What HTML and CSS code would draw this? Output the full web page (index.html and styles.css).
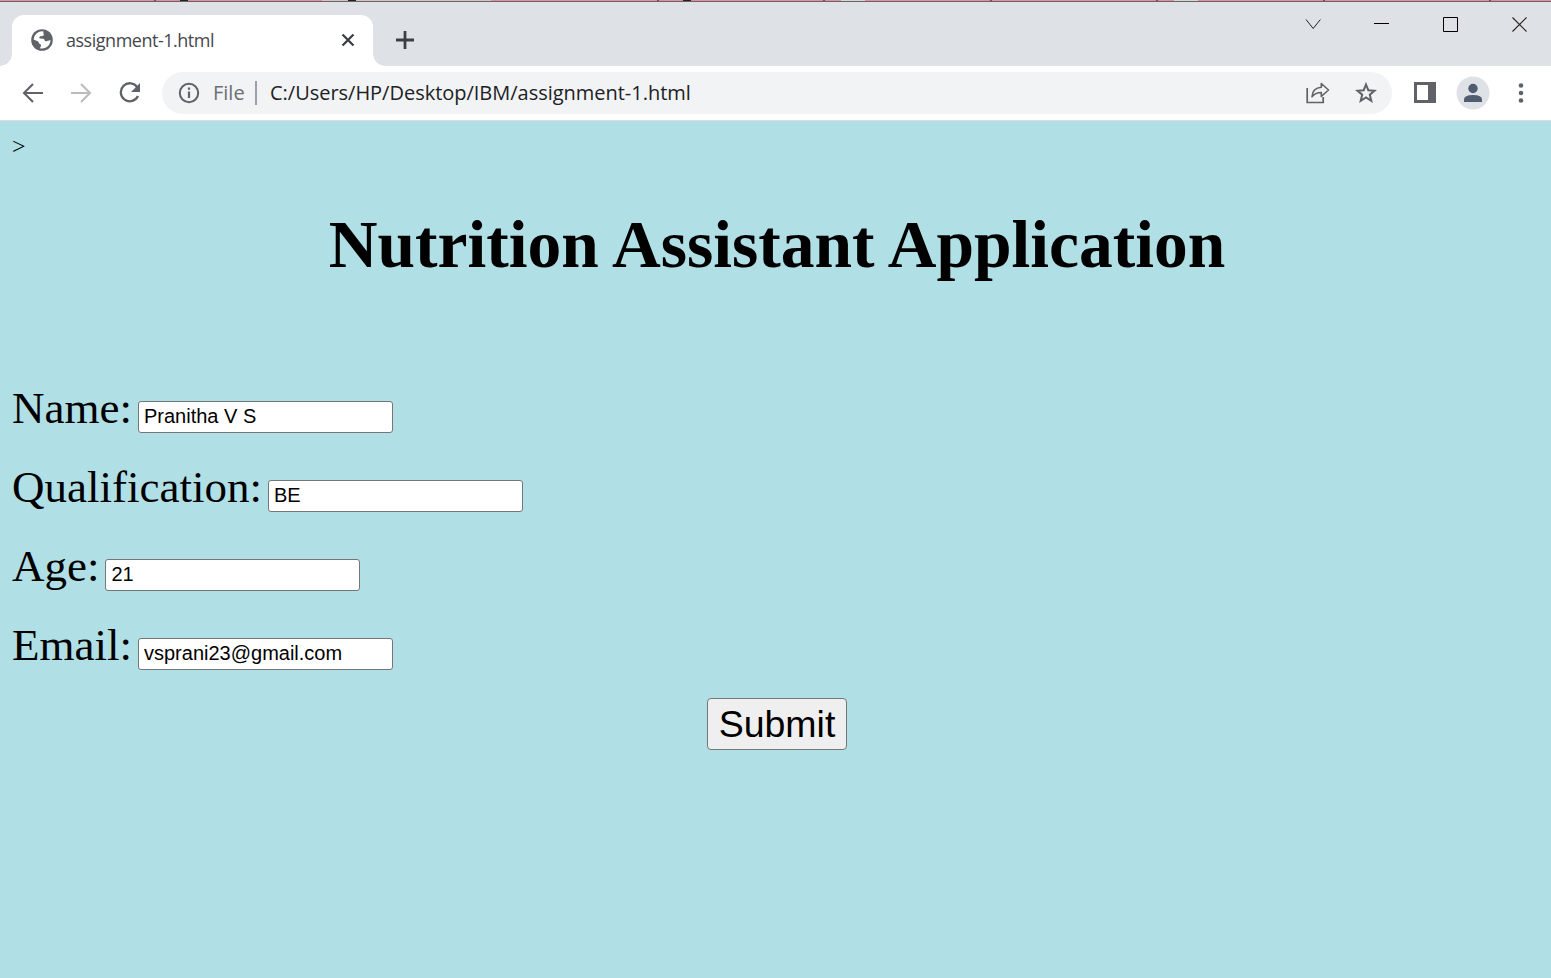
FILE: index.html
```html
<!DOCTYPE html>
<html lang="en">
<head>
<meta charset="utf-8">
<title>assignment-1.html</title>
<link rel="stylesheet" href="styles.css">
</head>
<body>
<div class="window">
  <div class="backdrop"></div>
  <header class="tabstrip">
    <div class="tab">
      <svg class="globe" width="22" height="22" viewBox="0 0 22 22"><circle cx="11" cy="11" r="10.8" fill="#5f6368"/><path d="M12.5 2.500 Q12 4.500 13.200 6 Q11.500 7.500 9.500 7 L8 8.500 Q9 10 11 9.500 Q13.800 9.500 13.800 12 Q16.500 12.500 19.500 11 A8.500 8.500 0 0 1 8.800 19.200 Q10.500 17.300 9.800 15.500 Q7.800 14.800 7.200 12.500 L2.600 10.500 A8.500 8.500 0 0 1 12.500 2.500Z" fill="#fff"/></svg>
      <span class="tab-title">assignment-1.html</span>
      <svg class="tab-close" width="14" height="14" viewBox="0 0 14 14"><path d="M1.500 1.500l11 11M12.500 1.500l-11 11" stroke="#3c4043" stroke-width="2.300"/></svg>
    </div>
    <svg class="new-tab" width="18" height="18" viewBox="0 0 18 18"><path d="M9 0v18M0 9h18" stroke="#3c4043" stroke-width="2.800"/></svg>
    <div class="window-controls">
      <svg width="16" height="16" viewBox="0 0 16 16"><path d="M1 3.500l7.200 9 7.200-9" fill="none" stroke="#222"/></svg>
      <svg width="16" height="16" viewBox="0 0 16 16"><path d="M0 7.500h15" stroke="#000"/></svg>
      <svg width="16" height="16" viewBox="0 0 16 16"><path d="M.5 1.500h14v14h-14z" fill="none" stroke="#000"/></svg>
      <svg width="16" height="16" viewBox="0 0 16 16"><path d="M.5 1.500l14 14M14.500 1.500l-14 14" stroke="#222" stroke-width="1.100"/></svg>
    </div>
  </header>
  <nav class="toolbar">
    <svg class="back" width="22" height="20" viewBox="0 0 22 20"><path d="M21 10H2.500M11 1L2 10l9 9" fill="none" stroke="#5f6368" stroke-width="2.100"/></svg>
    <svg class="forward" width="22" height="20" viewBox="0 0 22 20"><path d="M0 10h18.500M10 1l9 9-9 9" fill="none" stroke="#babcbe" stroke-width="2.100"/></svg>
    <svg class="reload" width="22" height="22" viewBox="0 0 22 22"><path d="M18.300 5.300A9 9 0 1 0 19 14" fill="none" stroke="#5f6368" stroke-width="2.300"/><path d="M21 1v9h-9z" fill="#5f6368"/></svg>
    <div class="omnibox">
      <svg width="22" height="22" viewBox="0 0 22 22"><circle cx="11" cy="11" r="9.200" fill="none" stroke="#5f6368" stroke-width="2"/><path d="M11 9.500V16M11 5.500v2.200" stroke="#5f6368" stroke-width="2.200"/></svg>
      <span class="scheme">File</span>
      <span class="divider"></span>
      <span class="url">C:/Users/HP/Desktop/IBM/assignment-1.html</span>
      <svg class="share" width="24" height="22" viewBox="0 0 24 22"><path d="M1.200 6v14.500h16V15" fill="none" stroke="#5f6368" stroke-width="1.700"/><path d="M15.300 1.500L22.500 8l-7.200 6.500v-4q-6 0-9.300 4.200Q6.500 6 15.300 5.300z" fill="none" stroke="#5f6368" stroke-width="1.600" stroke-linejoin="round"/></svg>
      <svg class="star" width="22" height="22" viewBox="0 0 22 22"><path d="M11 2.500l2.300 5.700 6.200.500-4.700 4 1.500 6.100L11 15.500l-5.300 3.300 1.500-6.100-4.700-4 6.200-.500z" fill="none" stroke="#5f6368" stroke-width="2"/></svg>
    </div>
    <svg class="panel" width="22" height="21" viewBox="0 0 22 21"><path d="M0 0h22v21H0zM3 3v15h11V3z" fill="#5f6368" fill-rule="evenodd"/></svg>
    <svg class="avatar" width="34" height="34" viewBox="0 0 34 34"><circle cx="17" cy="17" r="16.500" fill="#dee1e6"/><circle cx="17" cy="12.500" r="4.700" fill="#515c70"/><path d="M8 26v-2.500q0-4.500 9-4.500t9 4.500V26z" fill="#515c70"/></svg>
    <svg class="menu" width="6" height="20" viewBox="0 0 6 20"><g fill="#5f6368"><circle cx="3" cy="2.500" r="2.300"/><circle cx="3" cy="10" r="2.300"/><circle cx="3" cy="17.500" r="2.300"/></g></svg>
  </nav>
  <main class="page">
    <div class="stray">&gt;</div>
    <h1 class="heading">Nutrition Assistant Application</h1>
    <form class="form">
      <div class="row"><label class="label" for="name">Name:</label> <input class="field" id="name" value="Pranitha V S"></div>
      <div class="row"><label class="label" for="qualification">Qualification:</label> <input class="field" id="qualification" value="BE"></div>
      <div class="row"><label class="label" for="age">Age:</label> <input class="field" id="age" value="21"></div>
      <div class="row"><label class="label" for="email">Email:</label> <input class="field" id="email" value="vsprani23@gmail.com"></div>
      <div class="actions"><button class="submit" type="button">Submit</button></div>
    </form>
  </main>
</div>
</body>
</html>
```
FILE: styles.css
```css
* { box-sizing: border-box; }
body { margin: 0; background: #b0dfe5; }
svg { display: block; flex: none; }

.window { height: 978px; display: flex; flex-direction: column; overflow: hidden; }

/* Sliver of the window behind, visible above the tab strip */
.backdrop {
  flex: none;
  height: 2px;
  border-bottom: 1px solid #6b6467;
  background:
    linear-gradient(#222, #222) 180px 0 / 8px 1px no-repeat,
    linear-gradient(#222, #222) 348px 0 / 8px 1px no-repeat,
    linear-gradient(#222, #222) 683px 0 / 8px 1px no-repeat,
    linear-gradient(#80505a, #80505a) 154px 0 / 2px 1px no-repeat,
    linear-gradient(#80505a, #80505a) 657px 0 / 2px 1px no-repeat,
    linear-gradient(#80505a, #80505a) 823px 0 / 2px 1px no-repeat,
    linear-gradient(#80505a, #80505a) 990px 0 / 2px 1px no-repeat,
    linear-gradient(#80505a, #80505a) 1156px 0 / 2px 1px no-repeat,
    linear-gradient(#80505a, #80505a) 1323px 0 / 2px 1px no-repeat,
    linear-gradient(#80505a, #80505a) 1489px 0 / 2px 1px no-repeat,
    linear-gradient(#d9c3c0, #d9c3c0) 322px 0 / 169px 1px no-repeat,
    linear-gradient(#d3d9d5, #d3d9d5) 841px 0 / 24px 1px no-repeat,
    linear-gradient(#d3d9d5, #d3d9d5) 1174px 0 / 24px 1px no-repeat,
    #df8f9e;
}

.tabstrip { flex: none; height: 64px; display: flex; align-items: flex-start; background: #dee1e6; padding: 13px 0 0 12px; }
.tab { position: relative; width: 361px; height: 51px; display: flex; align-items: center; padding: 0 18px 2px 19px; background: #fff; border-radius: 12px 12px 0 0; }
.tab::before, .tab::after { content: ""; position: absolute; bottom: 0; width: 12px; height: 12px; }
.tab::before { left: -12px; background: radial-gradient(circle at 0 0, transparent 11.5px, #fff 12px); }
.tab::after { right: -12px; background: radial-gradient(circle at 100% 0, transparent 11.5px, #fff 12px); }
.tab-title { margin-left: 13px; font: 18px/24px "Open Sans", sans-serif; color: #45484d; letter-spacing: -.48px; white-space: nowrap; }
.tab-close { margin-left: auto; }
.new-tab { margin: 16px 0 0 23px; }
.window-controls { margin: 1px 23px 0 auto; display: flex; gap: 53px; }

.toolbar { flex: none; height: 55px; display: flex; align-items: center; padding: 0 27px 1px 22px; background: #fff; border-bottom: 1px solid #dadce0; }
.forward { margin-left: 27px; }
.reload { margin-left: 26px; }
.omnibox { flex: 1; margin-left: 21px; height: 42px; display: flex; align-items: center; padding: 0 15px 0 16px; background: #f1f3f4; border-radius: 21px; font: 20px/28px "Open Sans", sans-serif; white-space: nowrap; }
.scheme { width: 32px; margin: 1px 0 0 13px; color: #6b6f74; }
.divider { width: 2px; height: 24px; margin-left: 10px; background: #9aa0a6; }
.url { margin: 1px 0 0 13px; color: #202124; letter-spacing: -.02px; }
.share { margin-left: auto; }
.star { margin-left: 25px; }
.panel { margin-left: 22px; }
.avatar { margin-left: 20px; }
.menu { margin-left: 28px; }

.page { flex: 1; padding: 12px 10px 0 12px; background: #b0dfe5; font-family: "Liberation Serif", serif; font-size: 24px; color: #000; }
.stray { height: 27px; line-height: 27px; }
.heading { margin: 46px 0 0 1px; height: 78px; line-height: 78px; font-size: 67.5px; font-weight: bold; text-align: center; white-space: nowrap; }
.form { margin-top: 98px; }
.row { height: 52px; margin-bottom: 27px; line-height: 52px; white-space: nowrap; }
.label { font-size: 45px; line-height: 52px; }
.field { width: 255px; height: 32px; margin: 0; padding: 1px 5px; border: 1px solid #767676; border-radius: 3px; background: #fff; font: 20px "Liberation Sans", sans-serif; color: #000; outline: 0; }
.actions { display: flex; justify-content: center; }
.submit { width: 140px; height: 52px; padding: 0 0 0 1px; border: 1px solid #767676; border-radius: 4px; background: #efefef; font: 37.5px "Liberation Sans", sans-serif; color: #000; }
```
